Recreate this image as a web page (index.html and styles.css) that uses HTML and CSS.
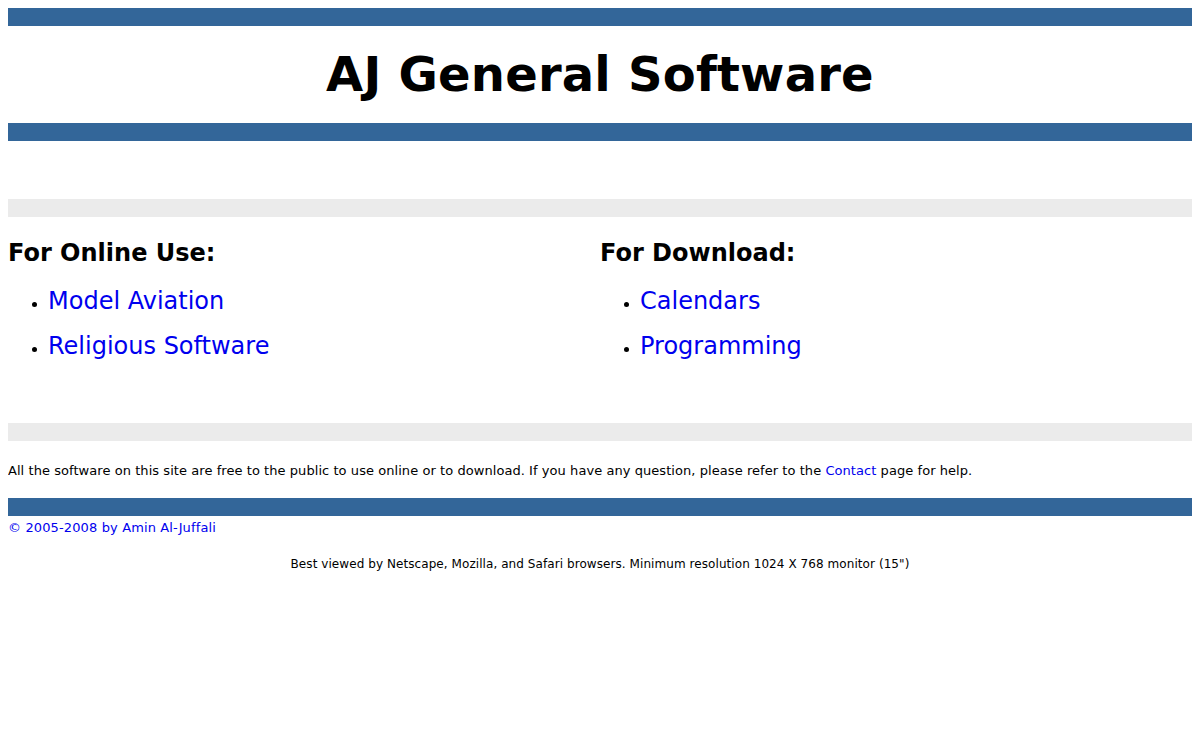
FILE: index.html
```html
<!DOCTYPE html>
<html>
<head>
<meta charset="utf-8">
<title>AJ General Software</title>
<link rel="stylesheet" href="styles.css">
</head>
<body>
<div class="bar blue"></div>
<h1 class="title">AJ General Software</h1>
<div class="bar blue"></div>
<div class="spacer"></div>
<div class="bar grey"></div>
<div class="cols">
  <div class="col">
    <h2 class="head">For Online Use:</h2>
    <ul class="links">
      <li><a href="#">Model Aviation</a></li>
      <li><a href="#">Religious Software</a></li>
    </ul>
  </div>
  <div class="col">
    <h2 class="head">For Download:</h2>
    <ul class="links">
      <li><a href="#">Calendars</a></li>
      <li><a href="#">Programming</a></li>
    </ul>
  </div>
</div>
<div class="bar grey"></div>
<p class="note">All the software on this site are free to the public to use online or to download. If you have any question, please refer to the <a href="#">Contact</a> page for help.</p>
<div class="bar blue"></div>
<div class="copy"><a href="#">© 2005-2008 by Amin Al-Juffali</a></div>
<p class="best">Best viewed by Netscape, Mozilla, and Safari browsers. Minimum resolution 1024 X 768 monitor (15")</p>
</body>
</html>
```
FILE: styles.css
```css
body {
  margin: 8px;
  font-family: "DejaVu Sans", Verdana, sans-serif;
  font-size: 13px;
  color: #000;
  background: #fff;
}
a { color: #0000ee; text-decoration: none; }
.bar { height: 18px; }
.blue { background: #336699; }
.grey { background: #ebebeb; }
.title {
  margin: 0;
  height: 97px;
  line-height: 97px;
  text-align: center;
  font-size: 48px;
  font-weight: bold;
  letter-spacing: 0.2px;
}
.spacer { height: 58px; }
.cols {
  display: grid;
  grid-template-columns: 1fr 1fr;
  height: 206px;
}
.head {
  margin: 21px 0 0;
  font-size: 24px;
  line-height: 30px;
  font-weight: bold;
}
.links {
  margin: 11px 0 0;
  padding-left: 40px;
  list-style: disc;
}
.links li {
  font-size: 15px;
  line-height: 45px;
  height: 45px;
}
.links a { font-size: 24px; }
.note {
  margin: 0;
  padding: 21px 0 19px;
  line-height: 17px;
  letter-spacing: 0.06px;
}
.copy {
  line-height: 20px;
  padding-top: 2px;
  letter-spacing: 0.13px;
}
.best {
  margin: 18px 0 0;
  text-align: center;
  font-size: 12px;
  line-height: 17px;
  letter-spacing: 0.07px;
}
```
